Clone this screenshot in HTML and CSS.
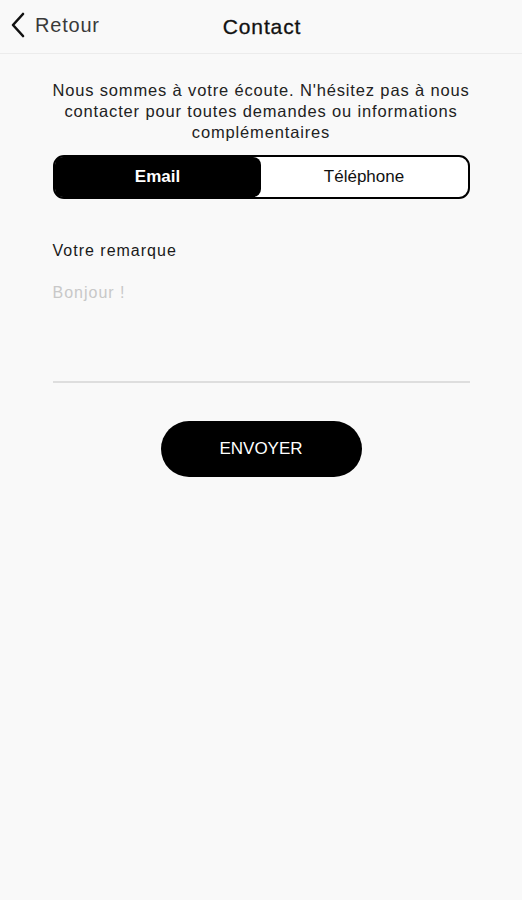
FILE: index.html
```html
<!DOCTYPE html>
<html lang="fr">
<head>
    <meta charset="UTF-8">
    <meta name="viewport" content="width=device-width, initial-scale=1.0">
    <title>Contact</title>
    <link rel="stylesheet" href="styles.css">
</head>
<body>
    <header class="topbar">
        <a class="back" href="#">
            <svg class="chevron" width="16" height="26" viewBox="0 0 16 26">
                <path d="M13 2 L3 13 L13 24" fill="none" stroke="#111" stroke-width="2.6" stroke-linecap="round" stroke-linejoin="round"/>
            </svg>
            <span>Retour</span>
        </a>
        <h1>Contact</h1>
    </header>

    <main class="content">
        <p class="intro">Nous sommes à votre écoute. N'hésitez pas à nous contacter pour toutes demandes ou informations complémentaires</p>

        <div class="segmented">
            <button class="seg active">Email</button>
            <button class="seg">Téléphone</button>
        </div>

        <label class="field-label" for="remarque">Votre remarque</label>
        <textarea id="remarque" class="field" placeholder="Bonjour !"></textarea>

        <button class="send">ENVOYER</button>
    </main>
</body>
</html>
```

FILE: styles.css
```css
body {
    margin: 0;
    padding: 0;
    background-color: #f9f9f9;
    font-family: "Liberation Sans", Arial, sans-serif;
    color: #1a1a1a;
}
.topbar {
    position: relative;
    height: 53px;
    border-bottom: 1px solid #ececec;
    display: flex;
    align-items: center;
    justify-content: center;
}
.topbar h1 {
    margin: 0 0 0 2px;
    font-size: 21px;
    font-weight: normal;
    letter-spacing: 0.9px;
    color: #111;
    -webkit-text-stroke: 0.3px #111;
}
.back {
    position: absolute;
    left: 10px;
    top: 12px;
    display: flex;
    align-items: center;
    gap: 9px;
    text-decoration: none;
    color: #3a3a3a;
    font-size: 20px;
    letter-spacing: 0.8px;
}
.chevron {
    display: block;
}
.content {
    width: 417px;
    margin: 0 auto;
    padding-top: 26px;
    display: flex;
    flex-direction: column;
}
.intro {
    margin: 0 -4px;
    text-align: center;
    font-size: 16.5px;
    line-height: 21px;
    letter-spacing: 0.85px;
    color: #222;
}
.segmented {
    margin-top: 12px;
    height: 40px;
    border: 2px solid #000;
    border-radius: 11px;
    background-color: #fff;
    display: flex;
}
.seg {
    flex: 1;
    border: none;
    background: none;
    font-family: inherit;
    font-size: 17px;
    color: #111;
    cursor: pointer;
}
.seg.active {
    flex: 0 0 206px;
    background-color: #000;
    color: #fff;
    font-weight: bold;
    border-radius: 8px;
}
.field-label {
    margin-top: 43px;
    font-size: 16px;
    letter-spacing: 1px;
    color: #1a1a1a;
}
.field {
    margin-top: 24px;
    height: 97px;
    padding: 0;
    border: none;
    border-bottom: 2px solid #dedede;
    background: none;
    resize: none;
    font-family: inherit;
    font-size: 16px;
    letter-spacing: 1px;
    color: #222;
    outline: none;
}
.field::placeholder {
    color: #c8c8c8;
}
.send {
    align-self: center;
    margin-top: 38px;
    width: 201px;
    height: 56px;
    border: none;
    border-radius: 28px;
    background-color: #000;
    color: #fff;
    font-family: inherit;
    font-size: 17px;
    cursor: pointer;
}
```
